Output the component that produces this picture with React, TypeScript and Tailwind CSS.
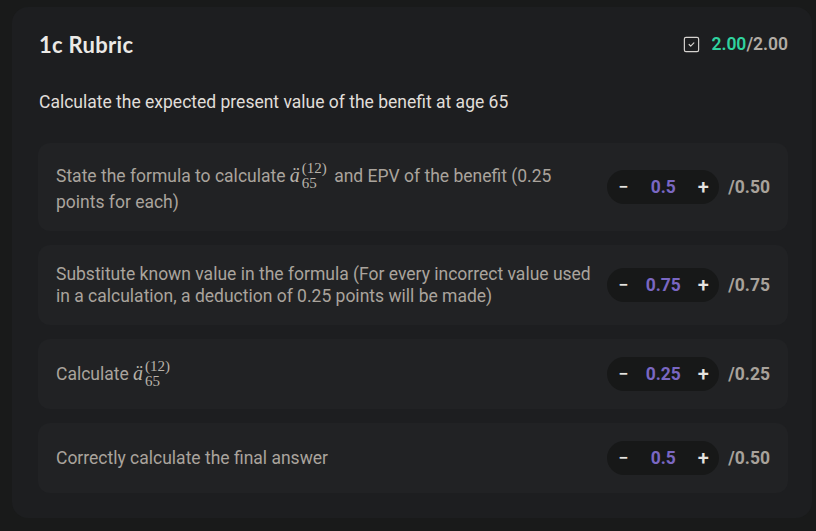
import { SquareCheck } from "lucide-react";

type Criterio = {
  id: string;
  texto: React.ReactNode;
  valor: string;
  maximo: string;
};

function Annuity() {
  return (
    <span className="inline-block whitespace-nowrap mr-[3px] font-['Liberation_Serif',serif] text-[#b8b2aa]">
      <span className="italic text-[20px]">ä</span>
      <span className="inline-flex flex-col align-[9px] text-[15px] leading-[15px] ml-[2px]">
        <span>(12)</span>
        <span>65</span>
      </span>
    </span>
  );
}

const CRITERIOS: Criterio[] = [
  {
    id: "a",
    texto: (
      <>
        State the formula to calculate <Annuity /> and EPV of the benefit (0.25 points for each)
      </>
    ),
    valor: "0.5",
    maximo: "/0.50",
  },
  {
    id: "b",
    texto:
      "Substitute known value in the formula (For every incorrect value used in a calculation, a deduction of 0.25 points will be made)",
    valor: "0.75",
    maximo: "/0.75",
  },
  {
    id: "c",
    texto: (
      <>
        Calculate <Annuity />
      </>
    ),
    valor: "0.25",
    maximo: "/0.25",
  },
  {
    id: "d",
    texto: "Correctly calculate the final answer",
    valor: "0.5",
    maximo: "/0.50",
  },
];

function Stepper({ valor, maximo }: { valor: string; maximo: string }) {
  return (
    <div className="flex items-center gap-[9px] shrink-0">
      <div className="w-[112px] h-[34px] rounded-full bg-[#171818] flex items-center justify-between px-[10px]">
        <span className="w-[12px] text-center text-[#e6e4e1] text-[18px] font-medium leading-none">
          −
        </span>
        <span className="text-[#7a67c2] text-[17.5px] font-bold">{valor}</span>
        <span className="w-[12px] text-center text-[#e6e4e1] text-[20px] font-medium leading-none">
          +
        </span>
      </div>
      <span className="text-[#a8a29b] text-[17.5px] font-bold">{maximo}</span>
    </div>
  );
}

export default function App() {
  return (
    <div className="min-h-[531px] bg-[#191a1a] pt-[7px] pl-[12px] pr-[4px] font-['Roboto',sans-serif]">
      <div className="w-[800px] rounded-[16px] bg-[#1d1e20] pl-[26px] pr-[24px] pt-[24px] pb-[25px]">
        <div className="flex items-center justify-between h-[26px]">
          <h2 className="font-['Lato',sans-serif] text-[22px] font-bold tracking-[0.3px] text-[#ebe9e6] pl-[1px]">
            1c Rubric
          </h2>
          <div className="flex items-center gap-[10px] text-[17.5px] font-semibold">
            <SquareCheck size={19} strokeWidth={1.5} className="text-[#d6d3cf]" />
            <span>
              <span className="text-[#2fd39f]">2.00</span>
              <span className="text-[#b2aca5]">/2.00</span>
            </span>
          </div>
        </div>

        <p className="mt-[33px] text-[17.5px] leading-6 text-[#e0deda] pl-[1px]">
          Calculate the expected present value of the benefit at age 65
        </p>

        <div className="mt-[29px] flex flex-col gap-[14px]">
          {CRITERIOS.map((c) => (
            <div
              key={c.id}
              className="rounded-[12px] bg-[#212224] px-[18px] py-[18px] flex items-center gap-[12px]"
            >
              <div className="flex-1 text-[17.5px] leading-[22px] text-[#aaa49d]">
                {c.texto}
              </div>
              <Stepper valor={c.valor} maximo={c.maximo} />
            </div>
          ))}
        </div>
      </div>
    </div>
  );
}
